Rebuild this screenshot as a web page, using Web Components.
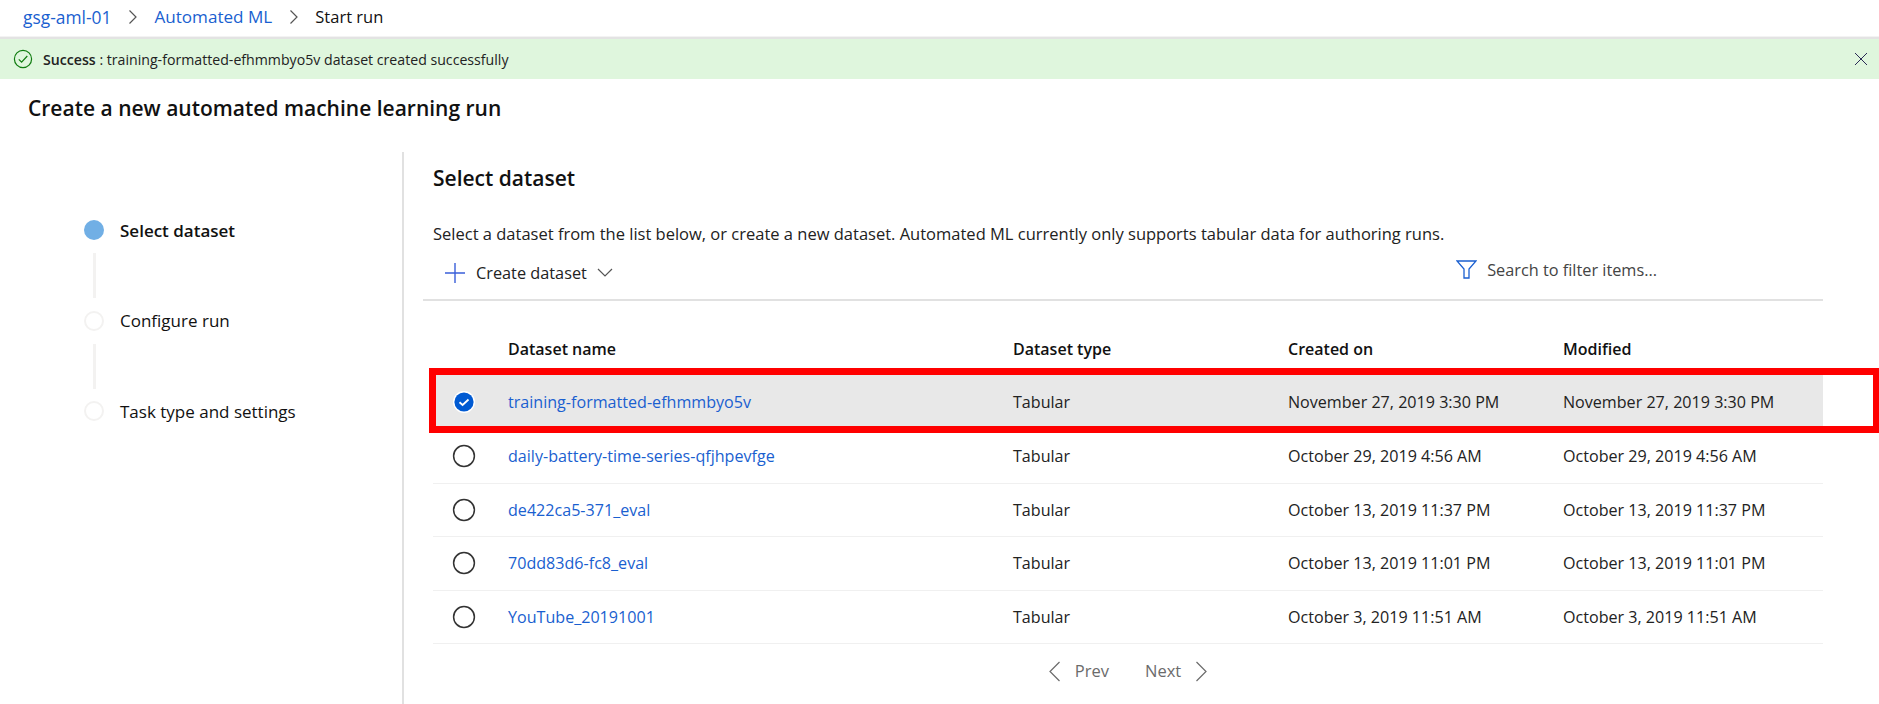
<!DOCTYPE html>
<html lang="en"><head><meta charset="utf-8"><title>Start run</title>
<style>
html,body{margin:0;background:#fff}
body{font:16px/22px "Open Sans","Noto Sans",sans-serif;color:#111;width:1879px;height:704px;overflow:hidden}
</style></head><body>
<aml-breadcrumb><a-crumb size="17.4">gsg-aml-01</a-crumb><a-crumb size="17.1">Automated ML</a-crumb><a-crumb size="16.5" current>Start run</a-crumb></aml-breadcrumb>
<aml-notice close><b slot="label">Success</b>training-formatted-efhmmbyo5v dataset created successfully</aml-notice>
<aml-title>Create a new automated machine learning run</aml-title>
<aml-wizard>
  <aml-stepper>
    <aml-step active>Select dataset</aml-step>
    <aml-step>Configure run</aml-step>
    <aml-step last>Task type and settings</aml-step>
  </aml-stepper>
  <aml-panel heading="Select dataset" description="Select a dataset from the list below, or create a new dataset. Automated ML currently only supports tabular data for authoring runs.">
    <aml-toolbar></aml-toolbar>
    <aml-row header name="Dataset name" type="Dataset type" created="Created on" modified="Modified"></aml-row>
    <aml-row selected name="training-formatted-efhmmbyo5v" type="Tabular" created="November 27, 2019 3:30 PM" modified="November 27, 2019 3:30 PM"></aml-row>
    <aml-row name="daily-battery-time-series-qfjhpevfge" type="Tabular" created="October 29, 2019 4:56 AM" modified="October 29, 2019 4:56 AM"></aml-row>
    <aml-row name="de422ca5-371_eval" type="Tabular" created="October 13, 2019 11:37 PM" modified="October 13, 2019 11:37 PM"></aml-row>
    <aml-row name="70dd83d6-fc8_eval" type="Tabular" created="October 13, 2019 11:01 PM" modified="October 13, 2019 11:01 PM"></aml-row>
    <aml-row name="YouTube_20191001" type="Tabular" created="October 3, 2019 11:51 AM" modified="October 3, 2019 11:51 AM"></aml-row>
    <aml-pager></aml-pager>
  </aml-panel>
</aml-wizard>
<script>
const def=(name,html)=>customElements.define(name,class extends HTMLElement{
  constructor(){super();this.attachShadow({mode:'open'}).innerHTML=typeof html==='function'?html(this):html;}
  connectedCallback(){if(typeof html==='function')this.shadowRoot.innerHTML=html(this);}
});
const chev=(d,w=12,h=16,c='#555')=>`<svg width="${w}" height="${h}" viewBox="0 0 ${w} ${h}" fill="none" stroke="${c}" stroke-width="1.2"><path d="${d}"/></svg>`;
def('aml-breadcrumb',`<style>:host{display:flex;align-items:center;box-sizing:border-box;height:39px;padding:0 0 3px 23px;border-bottom:2px solid #e3e3e3;box-shadow:inset 0 -1px 0 #f3f3f3}</style><slot></slot>`);
def('a-crumb',el=>`<style>:host{display:flex;align-items:center;font-size:${el.getAttribute('size')||17}px;color:${el.hasAttribute('current')?'#111':'#1a5fd0'}}
svg{margin:0 16.5px 0 16.5px}</style><slot></slot>${el.hasAttribute('current')?'':chev('M1.5 1.5L8 8L1.5 14.5',10,16)}`);
def('aml-notice',`<style>:host{display:flex;align-items:center;height:40px;background:#dff6dd;font-size:14.15px;color:#222}
svg.ok{margin:0 10px 0 13px;flex:none}
.t{flex:1;padding-top:1px}::slotted(b){font-weight:600}
svg.x{margin-right:11px}</style>
<svg class="ok" width="20" height="20" viewBox="0 0 20 20" fill="none" stroke="#107c10" stroke-width="1.2"><circle cx="10" cy="10" r="8.6"/><path d="M5.8 10.4L8.6 13.2L14.3 7"/></svg>
<span class="t"><slot name="label"></slot> : <slot></slot></span>
<svg class="x" width="14" height="14" viewBox="0 0 14 14" stroke="#2a2a55" stroke-width="1"><path d="M1 1L13 13M13 1L1 13"/></svg>`);
def('aml-title',`<style>:host{display:block;box-sizing:border-box;height:73px;padding:15px 0 0 28px;font-size:21px;line-height:28px;font-weight:600;color:#111}</style><slot></slot>`);
def('aml-wizard',`<style>:host{display:flex;height:552px;overflow:hidden}</style><slot></slot>`);
def('aml-stepper',`<style>:host{display:block;box-sizing:border-box;width:404px;flex:none;height:100%;padding:68px 0 0 84px;border-right:2px solid #e1e1e1}</style><slot></slot>`);
def('aml-step',el=>`<style>:host{display:block;height:90.5px}
.r{display:flex;align-items:center;height:20px;gap:16px}
.d{width:20px;height:20px;box-sizing:border-box;border-radius:50%;${el.hasAttribute('active')?'background:#71afe5':'border:2px solid #f3f2f1'}}
.l{font-size:17px;font-weight:${el.hasAttribute('active')?600:500};color:#111;white-space:nowrap;padding-top:1px}
.c{width:3px;height:45px;background:#f3f2f1;margin:13px 0 0 8.5px}</style>
<div class="r"><div class="d"></div><div class="l"><slot></slot></div></div>${el.hasAttribute('last')?'':'<div class="c"></div>'}`);
def('aml-panel',el=>`<style>:host{display:block;width:1419px;box-sizing:border-box;padding:12px 0 0 19px}
h2{margin:0 0 0 10px;font-size:21px;line-height:28px;font-weight:600;color:#111}
p{margin:31px 0 0 10px;font-size:16.5px;line-height:22px;color:#222;white-space:nowrap}</style>
<h2>${el.getAttribute('heading')||''}</h2><p>${el.getAttribute('description')||''}</p><slot></slot>`);
def('aml-toolbar',`<style>:host{display:flex;align-items:center;justify-content:space-between;box-sizing:border-box;height:56px;border-bottom:2px solid #e1e1e1;padding:0 166px 0 22px}
.a{display:flex;align-items:center;gap:11px;font-size:16.3px;color:#222;margin-top:1px}
.a span{margin-right:-1px}
.s{display:flex;align-items:center;gap:10px;font-size:16.3px;color:#444;margin-top:-5px}</style>
<div class="a"><svg width="20" height="20" viewBox="0 0 20 20" stroke="#3a5fd9" stroke-width="1.4"><path d="M10 0V20M0 10H20"/></svg><span>Create dataset</span>${chev('M1 1L8 8L15 1',16,10)}</div>
<div class="s"><svg width="21" height="19" viewBox="0 0 21 19" fill="none" stroke="#1a5fd0" stroke-width="1.3"><path d="M1 1H20L13 9V18H8V9Z"/></svg><span>Search to filter items...</span></div>`);
def('aml-row',el=>{const h=el.hasAttribute('header'),s=el.hasAttribute('selected');const g=a=>el.getAttribute(a)||'';
const radio=s?`<svg width="24" height="24" viewBox="0 0 24 24"><circle cx="12" cy="12" r="11" fill="#fff"/><circle cx="12" cy="12" r="9.6" fill="#005ad2"/><path d="M7.5 12.3L10.6 15L16.5 9.5" fill="none" stroke="#fff" stroke-width="1.8"/></svg>`
:`<svg width="24" height="24" viewBox="0 0 24 24"><circle cx="12" cy="12" r="10.4" fill="none" stroke="#333" stroke-width="1.5"/></svg>`;
return `<style>:host{display:grid;grid-template-columns:75px 505px 275px 275px 1fr;align-items:center;box-sizing:border-box;margin-left:10px;position:relative;font-size:16.1px;color:#222;
height:${h?'74px':s?'55px':'53.5px'};${h?'padding-top:22px;font-weight:600;color:#111;font-size:16px;':s?'background:#e8e8e8;padding-bottom:1px;':'border-bottom:1px solid #f0f0f0;'}}
.n{color:#1a5fd0}.h{color:#111}
.c{padding-left:19px;display:flex;align-items:center}
.box{position:absolute;left:-4px;top:-7px;right:-57px;bottom:-3px;border:7px solid #f00;box-sizing:border-box;pointer-events:none}</style>
<div class="c">${h?'':radio}</div><div class="${h?'h':'n'}">${g('name')}</div><div>${g('type')}</div><div>${g('created')}</div><div>${g('modified')}</div>${s?'<div class="box"></div>':''}`;});
def('aml-pager',`<style>:host{display:flex;align-items:center;justify-content:center;margin-left:10px;height:54px;font-size:16.5px;color:#6b6b6b}
.g{width:36px}.p{margin:0 0 0 14px}.n{margin:0 14px 0 0}</style>
${chev('M10.5 1L1 10.5L10.5 20',12,21,'#6b6b6b')}<span class="p">Prev</span><span class="g"></span><span class="n">Next</span>${chev('M1.5 1L11 10.5L1.5 20',12,21,'#6b6b6b')}`);
</script>
</body></html>
